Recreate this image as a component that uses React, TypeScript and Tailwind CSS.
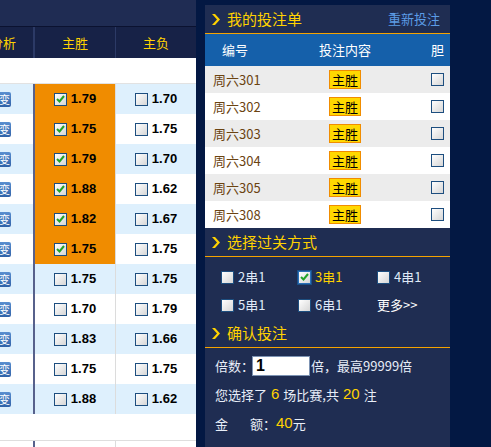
import React from 'react';

const cjk = "font-['Noto_Sans_CJK_SC','Liberation_Sans',sans-serif]";
const num = "font-['Liberation_Sans','Noto_Sans_CJK_SC',sans-serif]";

const Box = ({ checked = false, focus = false }: { checked?: boolean; focus?: boolean }) => (
  <span
    className={`inline-flex h-[13px] w-[13px] shrink-0 items-center justify-center border bg-gradient-to-br from-white to-[#d6d6d6] ${
      focus ? 'border-[#2a6fb8] outline outline-1 outline-[#1a4f86]' : 'border-[#1d4e7f]'
    }`}
  >
    {checked && (
      <svg width="9" height="8" viewBox="0 0 9 8">
        <path d="M1 4 L3.5 6.5 L8 1" fill="none" stroke="#22a32a" strokeWidth="2" />
      </svg>
    )}
  </span>
);

const Chevron = () => (
  <svg width="8" height="11" viewBox="0 0 8 11" className="shrink-0">
    <polygon points="0,0 3,0 8,5.5 3,11 0,11 5,5.5" fill="#ffd200" />
  </svg>
);

const odds = [
  ['1.79', '1.70'],
  ['1.75', '1.75'],
  ['1.79', '1.70'],
  ['1.88', '1.62'],
  ['1.82', '1.67'],
  ['1.75', '1.75'],
  ['1.75', '1.75'],
  ['1.70', '1.79'],
  ['1.83', '1.66'],
  ['1.75', '1.75'],
  ['1.88', '1.62'],
];

const picks = ['301', '302', '303', '304', '305', '308'];

const Odd = ({ v, checked }: { v: string; checked?: boolean }) => (
  <div className="flex items-center justify-center gap-[4px]">
    <Box checked={checked} />
    <span className={`${num} text-[13px] font-bold text-black`}>{v}</span>
  </div>
);

const MatchTable = () => (
  <div className="w-[196px] shrink-0 bg-white">
    <div className="h-[27px] border-b border-[#0b1230] bg-[#1f2c53]" />
    <div className={`${cjk} flex h-[31px] bg-[#172247] text-[13px] text-[#ffd200]`}>
      <div className="flex w-[33px] items-center justify-end overflow-hidden pr-[17px]">
        <span className="whitespace-nowrap">分析</span>
      </div>
      <div className="w-[2px] bg-[#2c3a66]" />
      <div className="flex w-[80px] items-center justify-center">主胜</div>
      <div className="w-px bg-[#2c3a66]" />
      <div className="flex flex-1 items-center justify-center">主负</div>
    </div>
    <div className="h-[26px] border-b border-[#e2e2e2]" />
    {odds.map((o, i) => (
      <div key={i} className={`flex h-[30px] ${i % 2 === 0 ? 'bg-[#def0fd]' : 'bg-white'}`}>
        <div className="flex w-[33px] items-center overflow-hidden">
          <span
            className={`${cjk} ml-[-11px] flex h-[15px] w-[22px] items-center justify-end rounded-[2px] bg-gradient-to-b from-[#5a8fd0] to-[#2f62a8] pr-[1px] text-[11px] leading-none text-white`}
          >
            变
          </span>
        </div>
        <div className="w-[2px] bg-[#57618c]" />
        <div className={`flex w-[80px] items-center justify-center ${i < 6 ? 'bg-[#f08c00]' : ''}`}>
          <Odd v={o[0]} checked={i < 6} />
        </div>
        <div className="w-px bg-[#dcdcdc]" />
        <div className="flex flex-1 items-center justify-center">
          <Odd v={o[1]} />
        </div>
      </div>
    ))}
    <div className="h-[27px] border-b border-[#dedede]" />
    <div className="flex h-[6px]">
      <div className="w-[33px]" />
      <div className="w-[2px] bg-[#57618c]" />
      <div className="w-[80px]" />
      <div className="w-px bg-[#dcdcdc]" />
    </div>
  </div>
);

const SectionHead = ({ title, right }: { title: string; right?: string }) => (
  <div className="flex h-[29px] items-center border-b border-[#f5a300] pl-[7px] pr-[10px]">
    <Chevron />
    <span className={`${cjk} ml-[7px] text-[15px] text-[#ffd200]`}>{title}</span>
    {right && <span className={`${cjk} ml-auto text-[13px] text-[#5c9ce6]`}>{right}</span>}
  </div>
);

const Pass = ({ label, checked }: { label: string; checked?: boolean }) => (
  <div className="flex items-center gap-[4px]">
    <Box checked={checked} focus={checked} />
    <span className={`${cjk} text-[13px] ${checked ? 'text-[#ffd200]' : 'text-[#dfe9f7]'}`}>{label}</span>
  </div>
);

const BetSlip = () => (
  <div className="mt-[5px] ml-[9px] flex w-[245px] shrink-0 flex-col bg-[#1f2d52]">
    <SectionHead title="我的投注单" right="重新投注" />
    <div className={`${cjk} flex h-[32px] items-center bg-[#1560aa] text-[13px] text-white`}>
      <div className="w-[60px] text-center">编号</div>
      <div className="w-[160px] text-center">投注内容</div>
      <div className="flex-1 text-center">胆</div>
    </div>
    {picks.map((p, i) => (
      <div key={p} className={`flex h-[27px] items-center ${i % 2 === 0 ? 'bg-[#ececec]' : 'bg-white'}`}>
        <div className={`${cjk} w-[60px] whitespace-nowrap pl-[8px] text-[13px] text-[#6b4311]`}>周六{p}</div>
        <div className="flex w-[160px] justify-center">
          <span className={`${cjk} border border-[#f08c00] bg-[#ffd800] px-[2px] text-[13px] leading-[17px] text-black`}>
            主胜
          </span>
        </div>
        <div className="flex flex-1 justify-center">
          <Box />
        </div>
      </div>
    ))}
    <SectionHead title="选择过关方式" />
    <div className="grid grid-cols-[77px_79px_1fr] grid-rows-[28px_28px] pt-[6px] pl-[16px]">
      <Pass label="2串1" />
      <Pass label="3串1" checked />
      <Pass label="4串1" />
      <Pass label="5串1" />
      <Pass label="6串1" />
      <div className={`${cjk} flex items-center text-[13px] text-white`}>更多&gt;&gt;</div>
    </div>
    <SectionHead title="确认投注" />
    <div className={`${cjk} flex flex-col pt-[7px] pl-[10px] text-[13px] text-[#e8eef8]`}>
      <div className="flex h-[21px] items-center">
        <span>倍数：</span>
        <span className="ml-[-2px] flex h-[20px] w-[58px] items-center border border-[#7d93b3] bg-white pl-[3px]">
          <span className={`${num} text-[16px] font-bold text-black`}>1</span>
        </span>
        <span className="ml-[1px]">倍，最高99999倍</span>
      </div>
      <div className="mt-[8px] flex h-[21px] items-center">
        <span>您选择了</span>
        <span className={`${num} mx-[4px] text-[15px] text-[#ffd200]`}>6</span>
        <span>场比赛,共</span>
        <span className={`${num} mx-[4px] text-[15px] text-[#ffd200]`}>20</span>
        <span>注</span>
      </div>
      <div className="mt-[8px] flex h-[21px] items-center">
        <span>金</span>
        <span className="ml-[22px]">额：</span>
        <span className={`${num} text-[15px] text-[#ffd200]`}>40</span>
        <span>元</span>
      </div>
    </div>
    <div className="flex-1" />
  </div>
);

export default function App() {
  return (
    <div className="flex h-[447px] w-[491px] overflow-hidden bg-[#031843]">
      <MatchTable />
      <BetSlip />
    </div>
  );
}
